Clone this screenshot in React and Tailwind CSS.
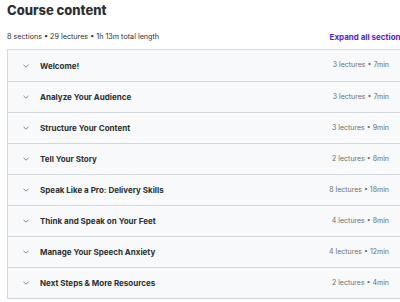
import React from "react";

const sections = [
  ["Welcome!", "3 lectures • 7min"],
  ["Analyze Your Audience", "3 lectures • 7min"],
  ["Structure Your Content", "3 lectures • 9min"],
  ["Tell Your Story", "2 lectures • 8min"],
  ["Speak Like a Pro: Delivery Skills", "8 lectures • 18min"],
  ["Think and Speak on Your Feet", "4 lectures • 8min"],
  ["Manage Your Speech Anxiety", "4 lectures • 12min"],
  ["Next Steps & More Resources", "2 lectures • 4min"],
];

function Chevron() {
  return (
    <svg width="6" height="4" viewBox="0 0 6 4" className="shrink-0">
      <path d="M0.5 0.8 L3 3.2 L5.5 0.8" fill="none" stroke="#6a6f73" strokeWidth="0.8" />
    </svg>
  );
}

export default function App() {
  return (
    <div className="w-[400px] h-[302px] overflow-hidden bg-white" style={{ fontFamily: "Inter, 'Liberation Sans', sans-serif" }}>
      <div className="w-[398px] ml-[7px]">
        <h2 className="text-[13px] leading-[20px] font-extrabold text-[#2d2f31]">Course content</h2>
        <div className="flex items-center justify-between mt-[11px] h-[12px]">
          <span className="text-[7.2px] text-[#2d2f31]">8 sections • 29 lectures • 1h 13m total length</span>
          <span className="text-[8px] font-bold text-[#5624d0] whitespace-nowrap">Expand all sections</span>
        </div>
        <div className="mt-[6px] border border-[#d1d7dc]">
          {sections.map(([title, meta], i) => (
            <div key={i} className={"flex items-center h-[31px] bg-[#f7f9fa] pl-[15px] pr-[15px] " + (i > 0 ? "border-t border-[#d1d7dc]" : "")}>
              <Chevron />
              <span className="ml-[11px] text-[8px] font-bold text-[#2d2f31] flex-1">{title}</span>
              <span className="text-[7px] text-[#6a6f73]">{meta}</span>
            </div>
          ))}
        </div>
      </div>
    </div>
  );
}
